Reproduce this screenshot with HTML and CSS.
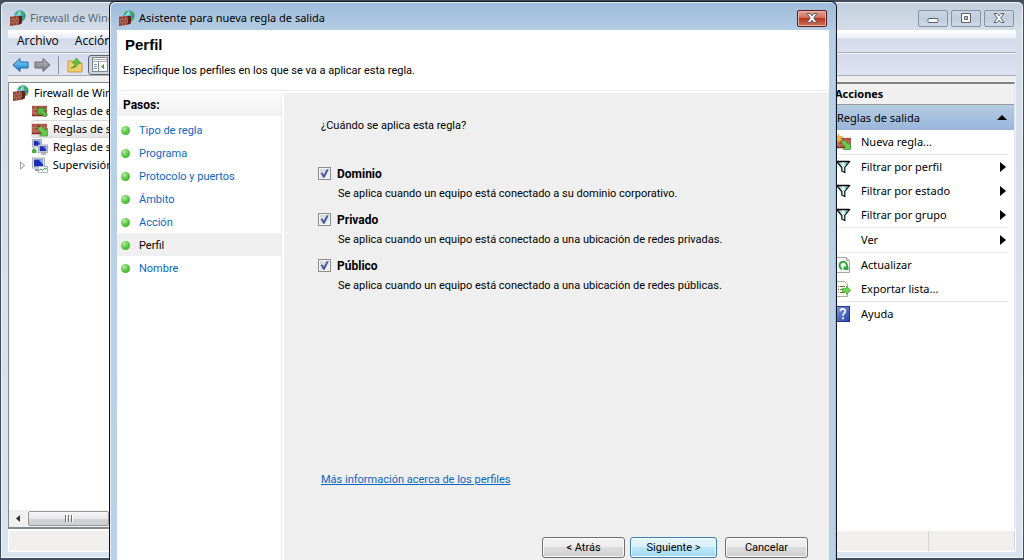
FILE: index.html
```html
<!DOCTYPE html>
<html lang="es">
<head>
  <meta charset="UTF-8" />
  <meta name="viewport" content="width=device-width, initial-scale=1.0" />
  <title>Asistente para nueva regla de salida</title>
  <link rel="stylesheet" href="styles.css">
</head>
<body>
  <!-- Iconos compartidos -->
  <svg class="sprite" aria-hidden="true">
    <defs>
      <linearGradient id="g-blue" x1="0" y1="0" x2="0" y2="1"><stop offset="0" stop-color="#8fdcfb"/><stop offset="1" stop-color="#1179cf"/></linearGradient>
      <linearGradient id="g-gray" x1="0" y1="0" x2="0" y2="1"><stop offset="0" stop-color="#b5b8bd"/><stop offset="1" stop-color="#777a80"/></linearGradient>
      <linearGradient id="g-help" x1="0" y1="0" x2="1" y2="1"><stop offset="0" stop-color="#7a9be6"/><stop offset="1" stop-color="#2b3fa8"/></linearGradient>
      <linearGradient id="g-funnel" x1="0" y1="0" x2="1" y2="0"><stop offset="0" stop-color="#2d7f80"/><stop offset="0.5" stop-color="#e6ffff"/><stop offset="1" stop-color="#3a8c8e"/></linearGradient>
      <radialGradient id="g-globe" cx="0.35" cy="0.3" r="0.8"><stop offset="0" stop-color="#b9f0ff"/><stop offset="0.5" stop-color="#3ba0d8"/><stop offset="1" stop-color="#12559c"/></radialGradient>
    </defs>
    <symbol id="i-bricks" viewBox="0 0 16 11">
      <rect width="16" height="11" fill="#a9503f"/>
      <path d="M0 3.5h16M0 7.5h16M4 0v3.5M10 0v3.5M1.500 3.500v4M7 3.500v4M13 3.500v4M4 7.500v3.500M10 7.500v3.500" stroke="#c39384" stroke-width="0.7"/>
      <path d="M0 10.500h16M5 2.600h4M8 6.600h4" stroke="#6b241c" stroke-width="0.9"/>
    </symbol>
    <symbol id="i-firewall" viewBox="0 0 16 16">
      <circle cx="9.800" cy="5.800" r="5.700" fill="url(#g-globe)"/>
      <path d="M5 4c.5-1.500 1.500-2.500 3-3l1 1-1 1.500L6.500 5zM11 1c2 .5 3.500 1.800 4 3.500l-1.500 1.500-2.500-1.500zM12 7.500l3.300-.8c-.2 1.800-1 3.300-2.300 4.300z" fill="#43b04a"/>
      <path d="M0 6.800l9-1v9L0 16z" fill="#94402f"/>
      <path d="M9 5.800l3 .5v7l-3 1.500z" fill="#5e211c"/>
      <path d="M0 9.800l9-1M0 12.900l9-1.100M3.300 6.500v3M6.500 6v3M1.700 9.600v3.200M5 9.200v3.200M8 8.900v3M3.300 12.500v3.200M6.500 12.100v3" stroke="#bd8577" stroke-width="0.6" fill="none"/>
    </symbol>
    <symbol id="i-in" viewBox="0 0 16 16">
      <use href="#i-bricks" x="0" y="2" width="15" height="12" preserveAspectRatio="none"/>
      <path d="M6 5h7.500l-2 2 4 4.500-2.500 2.500-4.500-4-2.500 2.300z" fill="#59c443" stroke="#267d22" stroke-width="0.7"/>
    </symbol>
    <symbol id="i-out" viewBox="0 0 16 16">
      <use href="#i-bricks" x="0" y="2" width="15" height="12"/>
      <path d="M6 8l3-3 4.500 4.500 2-2v7.500h-8l2.500-2.500z" fill="#68cc4f" stroke="#3a9a32" stroke-width="0.7"/>
    </symbol>
    <symbol id="i-new" viewBox="0 0 16 16">
      <use href="#i-bricks" x="1" y="3" width="15" height="12"/>
      <path d="M3.500 0l1 2.500L7.500 2 6 4.500 8 7 5 6.500 3.500 9.500 2.500 6.500 0 6l2-2L.5 2l2.500.5z" fill="#f5b942" stroke="#d98a2c" stroke-width="0.5"/>
      <path d="M6.500 8.500L9 6l4.500 4.500 2-2v7H8l2.500-2.500z" fill="#68cc4f" stroke="#3a9a32" stroke-width="0.7"/>
    </symbol>
    <symbol id="i-secure" viewBox="0 0 16 16">
      <rect x="0.500" y="0.500" width="9" height="7.500" fill="#e3e5ee" stroke="#a9aebd"/>
      <rect x="1.700" y="1.700" width="6.600" height="5" fill="#1c2fb4"/>
      <path d="M5 2h3v3z" fill="#7c93ef"/>
      <rect x="6.500" y="6" width="9" height="7.500" fill="#e3e5ee" stroke="#a9aebd"/>
      <rect x="7.700" y="7.200" width="6.600" height="5" fill="#1c2fb4"/>
      <path d="M11 7.500h3v3z" fill="#7c93ef"/>
      <path d="M9 15h5" stroke="#9aa0ae" stroke-width="1.500"/>
      <path d="M0 14v-3l2-2 2.500 2v3z" fill="#4fae49"/>
    </symbol>
    <symbol id="i-monitor" viewBox="0 0 16 16">
      <rect x="0.500" y="1" width="12" height="10" fill="#e3e5ee" stroke="#a9aebd"/>
      <rect x="2" y="2.500" width="9" height="7" fill="#1c2fb4"/>
      <path d="M6.500 2.500H11v5z" fill="#8ba1f5"/>
      <path d="M3 13h5" stroke="#8a90a0" stroke-width="2"/>
      <rect x="6.500" y="9.500" width="9" height="6" fill="#fff" stroke="#b2b9c2"/>
      <path d="M7 13.500l2-1.500 2 1.500 2-2.500 2 1" fill="none" stroke="#3fa54a"/>
    </symbol>
    <symbol id="i-funnel" viewBox="0 0 16 16">
      <path d="M1.500 2.500h13L9.800 8.500v5l-3-1.500V8.500z" fill="url(#g-funnel)" stroke="#0c1414" stroke-width="1.200"/>
      <path d="M1.500 2.500h13" stroke="#000" stroke-width="1.500"/>
    </symbol>
    <symbol id="i-refresh" viewBox="0 0 16 16">
      <path d="M1.500 0.500h10l3 3v12h-13z" fill="#fafafa" stroke="#a5a5a5"/>
      <path d="M11.500 0.500v3h3" fill="#ddd" stroke="#a5a5a5"/>
      <path d="M7 12A3.700 3.700 0 1 1 11 11" fill="none" stroke="#35a840" stroke-width="2"/>
      <path d="M8.500 9.500h5V13H8.500z" fill="#35a840"/>
    </symbol>
    <symbol id="i-export" viewBox="0 0 16 16">
      <path d="M1.500 0.500h8l3 3v12h-11z" fill="#fdfdf0" stroke="#b0aa98"/>
      <path d="M3 5.500h1M5 5.500h5M3 8.500h1M5 8.500h5M3 11.500h1M5 11.500h5" stroke="#776a55"/>
      <path d="M7.500 7.500h4V5l4 4.500-4 4v-2.500h-4z" fill="#6cd64e" stroke="#3fa135" stroke-width="0.7"/>
    </symbol>
    <symbol id="i-help" viewBox="0 0 16 16">
      <rect x="1" y="0.500" width="13.500" height="15" fill="url(#g-help)" stroke="#25348c"/>
      <path d="M5.300 5.300C5.300 2 10.500 2.300 10.300 5.300 10.200 7.200 8 7.200 8 9.700" fill="none" stroke="#fff" stroke-width="1.700"/>
      <circle cx="8" cy="12.300" r="1.100" fill="#fff"/>
    </symbol>
    <symbol id="i-cross" viewBox="0 0 12 10">
      <path d="M1 .5h3l2 2.300 2-2.300h3L7.700 5 11 9.500H8L6 7.200 4 9.500H1L4.300 5z" fill="#fff" stroke="#58606c"/>
    </symbol>
  </svg>

  <div class="window">
    <header class="titlebar">
      <svg class="icon"><use href="#i-firewall"/></svg>
      <span class="title">Firewall de Windows</span>
      <div class="caption">
        <button type="button" aria-label="Minimizar"><svg width="12" height="10" viewBox="0 0 12 10"><rect x="1" y="5.500" width="10" height="4" rx="1" fill="#fff" stroke="#58606c"/></svg></button>
        <button type="button" aria-label="Restaurar"><svg width="12" height="10" viewBox="0 0 12 10"><path d="M1.500.5h9v9h-9zM4.500 3.500v3h3v-3z" fill="#fff" fill-rule="evenodd" stroke="#58606c"/></svg></button>
        <button type="button" aria-label="Cerrar"><svg width="12" height="10"><use href="#i-cross"/></svg></button>
      </div>
    </header>

    <nav class="menu">
      <button type="button">Archivo</button>
      <button type="button">Acción</button>
    </nav>

    <div class="toolbar">
      <button type="button" aria-label="Atrás"><svg width="17" height="16" viewBox="0 0 17 16"><path d="M1 8l7-6.500V5h8v6H8v3.500z" fill="url(#g-blue)" stroke="#2166a5"/></svg></button>
      <button type="button" aria-label="Adelante"><svg width="17" height="16" viewBox="0 0 17 16"><path d="M16 8L9 1.500V5H1v6h8v3.500z" fill="url(#g-gray)" stroke="#66696e"/></svg></button>
      <span class="divider"></span>
      <button type="button" aria-label="Subir"><svg width="16" height="16" viewBox="0 0 16 16"><path d="M1 4h5l1 2h8v9H1z" fill="#f0cf6b" stroke="#c19a3a"/><path d="M4 11c3-1 4-3 4-5H5.500L9.500 1l4 5H11c0 3-3 5-7 5z" fill="#62c644" stroke="#37922a" stroke-width="0.700"/></svg></button>
      <button type="button" class="pressed" aria-label="Mostrar u ocultar árbol"><svg width="16" height="15" viewBox="0 0 16 15"><rect x="0.500" y="0.500" width="15" height="14" fill="#fff" stroke="#7d8792"/><path d="M1 2.500h14M1 4.500h14" stroke="#a7b0ba"/><path d="M6.500 5v9" stroke="#7d8792"/><path d="M2 7.500h3M2 9.500h3M2 11.500h3" stroke="#8b959f"/><path d="M12 7v5L9 9.500z" fill="#37a53a"/></svg></button>
    </div>

    <main class="panes">
      <section class="tree">
        <ul>
          <li class="root"><svg class="icon"><use href="#i-firewall"/></svg><span>Firewall de Windows</span></li>
          <li><svg class="icon"><use href="#i-in"/></svg><span>Reglas de entrada</span></li>
          <li class="current"><svg class="icon"><use href="#i-out"/></svg><span>Reglas de salida</span></li>
          <li><svg class="icon"><use href="#i-secure"/></svg><span>Reglas de seguridad</span></li>
          <li class="closed"><svg class="expander" width="6" height="9" viewBox="0 0 6 9"><path d="M.5.8v7.400L5 4.500z" fill="#fff" stroke="#949494"/></svg><svg class="icon"><use href="#i-monitor"/></svg><span>Supervisión</span></li>
        </ul>
        <div class="scrollbar">
          <svg width="16" height="9" viewBox="0 0 16 9"><path d="M10 1v7L6 4.500z" fill="#333"/></svg>
          <div class="thumb"><i></i><i></i><i></i></div>
        </div>
      </section>

      <aside class="actions">
        <h2>Acciones</h2>
        <h3>Reglas de salida <svg width="10" height="5" viewBox="0 0 10 5"><path d="M0 5l5-5 5 5z"/></svg></h3>
        <ul>
          <li><svg class="icon"><use href="#i-new"/></svg><span>Nueva regla...</span></li>
          <li class="group"><svg class="icon"><use href="#i-funnel"/></svg><span>Filtrar por perfil</span><svg class="more" viewBox="0 0 6 10"><path d="M0 0v10l6-5z"/></svg></li>
          <li><svg class="icon"><use href="#i-funnel"/></svg><span>Filtrar por estado</span><svg class="more" viewBox="0 0 6 10"><path d="M0 0v10l6-5z"/></svg></li>
          <li><svg class="icon"><use href="#i-funnel"/></svg><span>Filtrar por grupo</span><svg class="more" viewBox="0 0 6 10"><path d="M0 0v10l6-5z"/></svg></li>
          <li class="group"><div class="icon"></div><span>Ver</span><svg class="more" viewBox="0 0 6 10"><path d="M0 0v10l6-5z"/></svg></li>
          <li class="group"><svg class="icon"><use href="#i-refresh"/></svg><span>Actualizar</span></li>
          <li><svg class="icon"><use href="#i-export"/></svg><span>Exportar lista...</span></li>
          <li class="group"><svg class="icon"><use href="#i-help"/></svg><span>Ayuda</span></li>
        </ul>
      </aside>
    </main>

    <footer class="status"><span></span><span></span></footer>
  </div>

  <!-- Asistente -->
  <form class="dialog">
    <header class="titlebar">
      <svg class="icon"><use href="#i-firewall"/></svg>
      <span class="title">Asistente para nueva regla de salida</span>
      <div class="caption">
        <button type="button" class="close" aria-label="Cerrar"><svg width="12" height="10"><use href="#i-cross"/></svg></button>
      </div>
    </header>

    <div class="heading">
      <h1>Perfil</h1>
      <p>Especifique los perfiles en los que se va a aplicar esta regla.</p>
    </div>

    <div class="content">
      <nav class="steps">
        <h2>Pasos:</h2>
        <a href="#">Tipo de regla</a>
        <a href="#">Programa</a>
        <a href="#">Protocolo y puertos</a>
        <a href="#">Ámbito</a>
        <a href="#">Acción</a>
        <a href="#" class="active">Perfil</a>
        <a href="#">Nombre</a>
      </nav>

      <div class="page">
        <p class="question">¿Cuándo se aplica esta regla?</p>
        <div class="option">
          <input type="checkbox" id="dominio" checked>
          <label for="dominio">Dominio</label>
          <p>Se aplica cuando un equipo está conectado a su dominio corporativo.</p>
        </div>
        <div class="option">
          <input type="checkbox" id="privado" checked>
          <label for="privado">Privado</label>
          <p>Se aplica cuando un equipo está conectado a una ubicación de redes privadas.</p>
        </div>
        <div class="option">
          <input type="checkbox" id="publico" checked>
          <label for="publico">Público</label>
          <p>Se aplica cuando un equipo está conectado a una ubicación de redes públicas.</p>
        </div>
        <a class="info" href="#">Más información acerca de los perfiles</a>
        <div class="buttons">
          <button type="button">&lt; Atrás</button>
          <button type="submit" class="default">Siguiente &gt;</button>
          <button type="button" class="cancel">Cancelar</button>
        </div>
      </div>
    </div>
  </form>
</body>
</html>
```

FILE: styles.css
```css
* {
  box-sizing: border-box;
}
body {
  margin: 0;
  height: 100vh;
  overflow: hidden;
  position: relative;
  background: #4a5262;
  font-family: "Noto Sans", "Open Sans", sans-serif;
  font-size: 11px;
  color: #000;
}
h1, h2, h3, p, ul {
  margin: 0;
  padding: 0;
}
ul {
  list-style: none;
}
button {
  font: inherit;
  color: inherit;
  padding: 0;
}
.sprite {
  position: absolute;
  width: 0;
  height: 0;
}
.icon {
  width: 16px;
  height: 16px;
  flex: none;
}

/* Ventana principal */
.window {
  height: 100vh;
  display: flex;
  flex-direction: column;
  padding: 0 7px 6px;
  border: 1px solid #424b5c;
  border-width: 2px 1px;
  border-radius: 6px 6px 0 0;
  background: linear-gradient(#c3cedc, #d4dfea 30px, #dae4ee);
  box-shadow: inset 0 0 0 1px #eef4f9;
}
.titlebar {
  flex: none;
  display: flex;
  align-items: center;
  height: 28px;
  padding: 4px 2px 0;
  gap: 4px;
}
.titlebar .title {
  flex: 1;
  padding-bottom: 2px;
  white-space: nowrap;
}
.window > .titlebar {
  color: #5d6874;
}
.caption {
  display: flex;
  gap: 3px;
}
.caption button {
  width: 30px;
  height: 17px;
  display: flex;
  align-items: center;
  justify-content: center;
  border: 1px solid #8793a5;
  border-radius: 2px;
  background: linear-gradient(#cbd6e3, #c1cddc 50%, #cfdae6);
}
.menu {
  flex: none;
  display: flex;
  height: 23px;
  gap: 16px;
  padding: 0 9px 1px;
  border-bottom: 1px solid #aab0be;
  background: linear-gradient(#ffffff, #eceff8 8px, #d3d9ea 9px, #dbe0f0);
}
.menu button {
  border: 0;
  background: none;
  font-family: "Open Sans", "Noto Sans", sans-serif;
  font-size: 12px;
}
.toolbar {
  flex: none;
  display: flex;
  align-items: center;
  height: 23px;
  padding: 0 4px;
  gap: 5px;
  border-top: 1px solid #f5f6fb;
  border-bottom: 1px solid #a6acb9;
  background: linear-gradient(#d4daeb, #e0e3f4);
}
.toolbar button {
  display: flex;
  align-items: center;
  justify-content: center;
  height: 20px;
  border: 0;
  background: none;
}
.toolbar .pressed {
  width: 24px;
  border: 1px solid #5f6570;
  border-radius: 3px;
  background: #cfd3dd;
}
.toolbar .divider {
  width: 1px;
  height: 18px;
  margin: 0 3px 0 2px;
  background: #8a8f9b;
}
.panes {
  flex: 1;
  min-height: 0;
  display: flex;
  justify-content: space-between;
  padding-top: 6px;
  background: #f0f0f0;
}
.tree {
  width: 102px;
  display: flex;
  flex-direction: column;
  justify-content: space-between;
  padding-top: 1px;
  border: 1px solid #828790;
  border-width: 1px 0 2px 1px;
  background: #fff;
}
.tree li {
  display: flex;
  align-items: center;
  height: 18px;
  padding-left: 23px;
  gap: 5px;
  white-space: nowrap;
}
.tree li span,
.actions li span {
  padding-bottom: 2px;
}
.tree li span {
  min-width: 0;
  overflow: hidden;
}
.tree .root {
  padding-left: 4px;
}
.tree .current {
  margin-left: 22px;
  border: 1px solid #d9d9d9;
  border-radius: 3px;
  padding-left: 0;
  background: linear-gradient(#fafafa, #e5e5e5);
}
.tree .closed {
  padding-left: 11px;
}
.tree .closed .icon {
  margin-left: 1px;
}
.scrollbar {
  display: flex;
  align-items: center;
  height: 17px;
  padding: 1px;
  gap: 2px;
  background: #f0f0f0;
}
.scrollbar .thumb {
  display: flex;
  justify-content: center;
  align-items: center;
  gap: 1px;
  flex: 1;
  height: 15px;
  border: 1px solid #979797;
  border-radius: 2px;
  background: linear-gradient(#f5f5f5, #e9e9eb 50%, #d2d3d6 51%, #cdced2);
}
.thumb i {
  width: 2px;
  height: 7px;
  background: linear-gradient(90deg, #6d6d6d 50%, #fff 50%);
}

/* Panel de acciones */
.actions {
  width: 184px;
  margin-right: 1px;
  border-top: 2px solid #828282;
  border-right: 1px solid #dfe5ea;
  background: #fff;
}
.actions h2 {
  height: 21px;
  padding-left: 4px;
  line-height: 20px;
  font-size: 11px;
  border-bottom: 1px solid #9a9a9a;
  background: #f0f0f0;
}
.actions h3 {
  display: flex;
  align-items: center;
  justify-content: space-between;
  height: 25px;
  padding: 0 7px 0 6px;
  font-size: 11px;
  font-weight: normal;
  background: linear-gradient(#b6cbe3, #98b6da);
}
.actions li {
  display: flex;
  align-items: center;
  height: 24px;
  margin-right: 6px;
  padding-left: 4px;
  gap: 10px;
}
.actions .group {
  height: 25px;
  border-top: 1px solid #e9e9e9;
}
.actions .more {
  width: 6px;
  height: 10px;
  margin: 0 2px 0 auto;
}
.status {
  flex: none;
  display: flex;
  justify-content: flex-end;
  height: 23px;
  border: 1px solid #fff;
  border-top-width: 2px;
  background: #f1efee;
}
.status span {
  width: 86px;
  border-right: 1px solid #d5d5d5;
}

/* Asistente */
.dialog {
  position: absolute;
  top: 1px;
  bottom: 0;
  left: 109px;
  right: 187px;
  display: flex;
  flex-direction: column;
  padding: 0 7px;
  border: 1px solid #10161f;
  border-bottom: 0;
  border-radius: 6px 6px 0 0;
  background: linear-gradient(#9dbad8, #b6cde5 30px, #b9d1e8 120px, #bad0e7);
  box-shadow: inset -1px 0 #70d5f4, inset 1px 1px #e2edf7;
  font-family: Roboto, "Liberation Sans", sans-serif;
}
.dialog .titlebar {
  font-family: "Noto Sans", "Open Sans", sans-serif;
}
.dialog .close {
  border-color: #5b1c1c;
  background: linear-gradient(#e3a496, #cf6a58 48%, #b8341f 50%, #d0705a);
  box-shadow: inset 0 0 0 1px #e9b5a9;
}
.heading {
  flex: none;
  height: 61px;
  padding: 6px;
  border-bottom: 1px solid #ececec;
  background: #fff;
}
.heading h1 {
  padding-left: 2px;
  font-family: "Liberation Sans", Arial, sans-serif;
  font-size: 15px;
  line-height: 18px;
}
.heading p {
  margin-top: 9px;
  line-height: 16px;
}
.content {
  flex: 1;
  display: flex;
  padding-top: 2px;
  background: #fff;
}
.steps {
  width: 165px;
  border-right: 1px solid #ececec;
  background: #fff;
}
.steps h2 {
  height: 23px;
  margin-bottom: 2px;
  padding-left: 6px;
  font-size: 12px;
  line-height: 24px;
  background: linear-gradient(#fcfcfc, #f0f0f0);
}
.steps a {
  display: flex;
  align-items: center;
  height: 23px;
  padding: 2px 0 0 4px;
  gap: 9px;
  color: #0c66c6;
  text-decoration: none;
}
.steps a::before {
  content: "";
  width: 9px;
  height: 9px;
  border-radius: 50%;
  background: radial-gradient(circle at 35% 30%, #b4eda0, #56c83e 50%, #3b9c2c);
}
.steps .active {
  color: #000;
  background: #efefef;
}
.page {
  flex: 1;
  display: flex;
  flex-direction: column;
  align-items: flex-start;
  margin-left: 2px;
  padding: 25px 21px 2px 34px;
  background: #efefef;
}
.question {
  margin: 0 3px 31px;
  line-height: 16px;
}
.option {
  display: grid;
  grid-template-columns: 13px auto;
  column-gap: 6px;
  align-items: center;
  height: 46px;
  align-content: start;
}
.option input {
  appearance: none;
  position: relative;
  width: 13px;
  height: 13px;
  margin: 0 0 2px;
  border: 1px solid #8b8d90;
  background: linear-gradient(135deg, #cdd2d8, #f5f6f7);
  box-shadow: inset 0 0 0 1px #f4f4f4;
}
.option input:checked::after {
  content: "";
  position: absolute;
  inset: 1px;
  background: #4a5397;
  clip-path: polygon(8% 45%, 28% 40%, 42% 65%, 75% 2%, 98% 2%, 50% 98%, 35% 98%);
}
.option label {
  font-size: 12px;
  font-weight: bold;
  line-height: 19px;
}
.option p {
  grid-column: 2;
  padding-left: 1px;
  line-height: 19px;
}
.info {
  margin: auto 3px 49px;
  line-height: 16px;
  color: #0c66c6;
}
.buttons {
  display: flex;
  align-self: flex-end;
  gap: 5px;
}
.buttons button {
  width: 83px;
  height: 21px;
  border: 1px solid #707070;
  border-radius: 3px;
  background: linear-gradient(#f4f4f4, #ebebeb 49%, #dcdcdc 50%, #cfcfcf);
  box-shadow: inset 0 0 0 1px #fafafa;
}
.buttons .default {
  width: 87px;
  border-color: #3c7fb1;
  background: linear-gradient(#e8f5fc, #d8f0fc 49%, #bde6fb 50%, #a5d9f3);
}
.buttons .cancel {
  margin-left: 3px;
}
```
